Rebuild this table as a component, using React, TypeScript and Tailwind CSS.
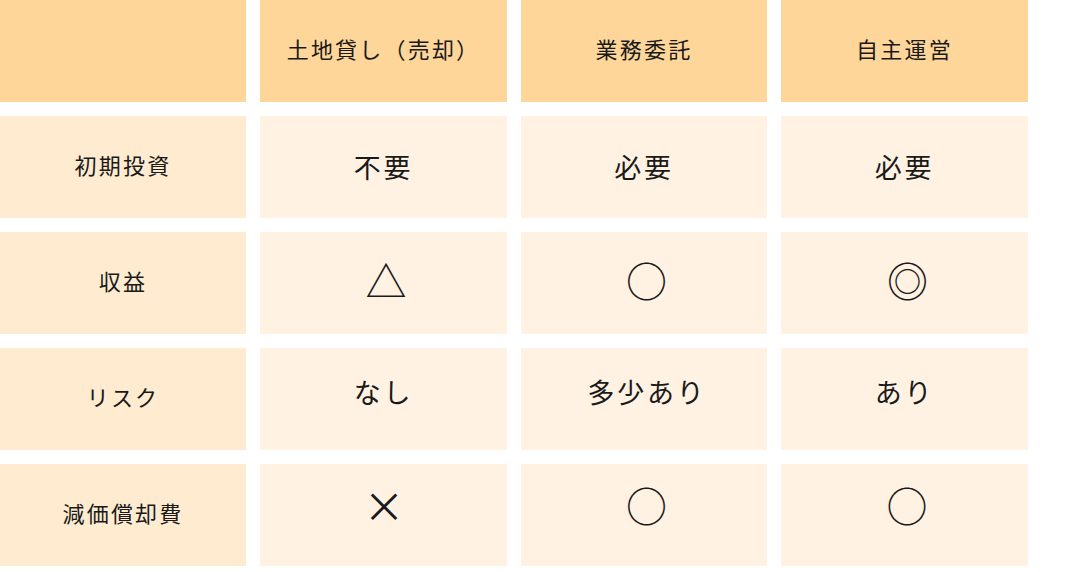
import React from "react";

const font = { fontFamily: '"Noto Sans CJK JP", "Noto Sans", sans-serif' };

type Cell = { t: string; sym?: boolean; cls?: string };

const rows: { label: string; cells: Cell[] }[] = [
  { label: "初期投資", cells: [{ t: "不要" }, { t: "必要" }, { t: "必要" }] },
  {
    label: "収益",
    cells: [
      { t: "△", sym: true, cls: "pb-[8px] pl-[5px]" },
      { t: "○", sym: true, cls: "pb-[8px] pl-[5px]" },
      { t: "◎", sym: true, cls: "pb-[8px] pl-[6px]" },
    ],
  },
  {
    label: "リスク",
    cells: [
      { t: "なし", cls: "pb-[14px]" },
      { t: "多少あり", cls: "pb-[14px] pl-[6px]" },
      { t: "あり", cls: "pb-[14px]" },
    ],
  },
  {
    label: "減価償却費",
    cells: [
      { t: "×", sym: true, cls: "pb-[22px] pl-[1px]" },
      { t: "○", sym: true, cls: "pb-[22px] pl-[5px]" },
      { t: "○", sym: true, cls: "pb-[22px] pl-[5px]" },
    ],
  },
];

export default function App() {
  return (
    <div className="w-[1069px] h-[572px] bg-white text-[#1a1a1a]" style={font}>
      <div className="grid grid-cols-[246px_247px_246px_247px] auto-rows-[102px] gap-[14px]">
        <div className="bg-[#fed699]" />
        {["土地貸し（売却）", "業務委託", "自主運営"].map((h) => (
          <div
            key={h}
            className="bg-[#fed699] flex items-center justify-center text-[22px] tracking-[0.1em] pb-[5px]"
          >
            {h}
          </div>
        ))}
        {rows.map((r) => (
          <React.Fragment key={r.label}>
            <div className="bg-[#ffecd0] flex items-center justify-center text-[22px] tracking-[0.1em] pb-[5px]">
              {r.label}
            </div>
            {r.cells.map((c, i) => (
              <div
                key={i}
                className={
                  "bg-[#fff2e3] flex items-center justify-center " +
                  (c.sym ? "text-[41px] leading-none " : "text-[27px] tracking-[0.1em] ") +
                  (c.cls ?? "")
                }
              >
                {c.t}
              </div>
            ))}
          </React.Fragment>
        ))}
      </div>
    </div>
  );
}
